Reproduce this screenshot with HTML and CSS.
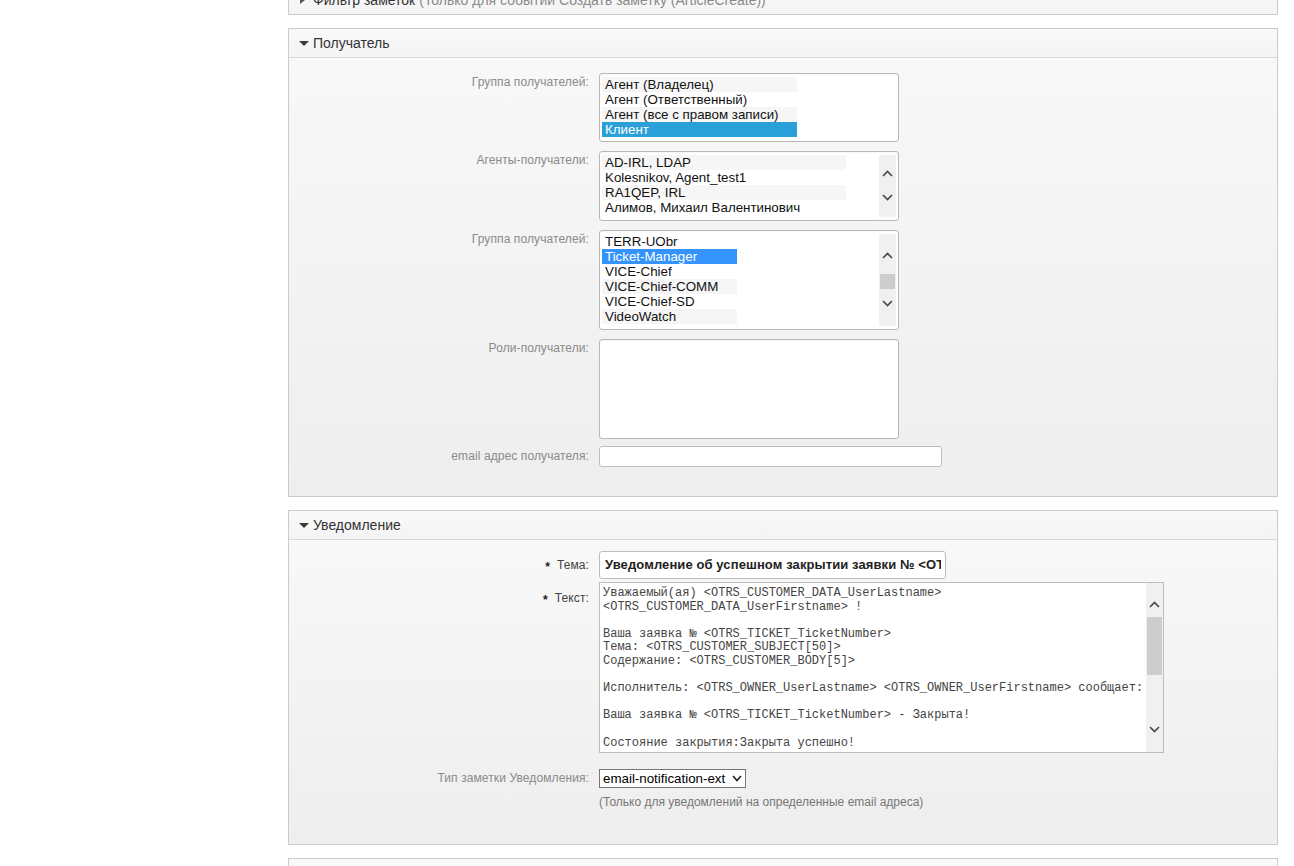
FILE: index.html
```html
<!DOCTYPE html>
<html lang="ru">
<head>
<meta charset="utf-8">
<title>Уведомление</title>
<link rel="stylesheet" href="styles.css">
</head>
<body>
<div class="page">
  <aside class="sidebar"></aside>
  <main class="main">
    <section class="widget collapsed">
      <div class="widget-header">
        <span class="tri tri-right"></span>
        <span class="title">Фильтр заметок</span>
        <span class="subtitle">(Только для событий Создать заметку (ArticleCreate))</span>
      </div>
    </section>

    <section class="widget open">
      <div class="widget-header">
        <span class="tri tri-down"></span>
        <span class="title">Получатель</span>
      </div>
      <div class="widget-content recipients">
        <div class="field-row">
          <label class="field-label">Группа получателей:</label>
          <div class="listbox lb1">
            <div class="options opts-w1">
              <div class="opt stripe">Агент (Владелец)</div>
              <div class="opt">Агент (Ответственный)</div>
              <div class="opt stripe">Агент (все с правом записи)</div>
              <div class="opt sel-a">Клиент</div>
            </div>
          </div>
        </div>
        <div class="field-row">
          <label class="field-label">Агенты-получатели:</label>
          <div class="listbox lb2">
            <div class="options opts-w2">
              <div class="opt stripe">AD-IRL, LDAP</div>
              <div class="opt">Kolesnikov, Agent_test1</div>
              <div class="opt stripe">RA1QEP, IRL</div>
              <div class="opt">Алимов, Михаил Валентинович</div>
            </div>
            <div class="scrollbar sb-lb2">
              <svg class="chev up" width="11" height="7" viewBox="0 0 11 7"><polyline points="1,6 5.5,1.5 10,6"/></svg>
              <svg class="chev down" width="11" height="7" viewBox="0 0 11 7"><polyline points="1,1 5.5,5.5 10,1"/></svg>
            </div>
          </div>
        </div>
        <div class="field-row">
          <label class="field-label">Группа получателей:</label>
          <div class="listbox lb3">
            <div class="options opts-w3">
              <div class="opt">TERR-UObr</div>
              <div class="opt sel-b">Ticket-Manager</div>
              <div class="opt">VICE-Chief</div>
              <div class="opt stripe">VICE-Chief-COMM</div>
              <div class="opt">VICE-Chief-SD</div>
              <div class="opt stripe">VideoWatch</div>
            </div>
            <div class="scrollbar sb-lb3">
              <svg class="chev up" width="11" height="7" viewBox="0 0 11 7"><polyline points="1,6 5.5,1.5 10,6"/></svg>
              <div class="thumb"></div>
              <svg class="chev down" width="11" height="7" viewBox="0 0 11 7"><polyline points="1,1 5.5,5.5 10,1"/></svg>
            </div>
          </div>
        </div>
        <div class="field-row">
          <label class="field-label">Роли-получатели:</label>
          <div class="listbox lb4"></div>
        </div>
        <div class="field-row center">
          <label class="field-label">email адрес получателя:</label>
          <div class="textinput email"></div>
        </div>
      </div>
    </section>

    <section class="widget open">
      <div class="widget-header">
        <span class="tri tri-down"></span>
        <span class="title">Уведомление</span>
      </div>
      <div class="widget-content notification">
        <div class="field-row center">
          <label class="field-label mandatory"><span class="star">*</span>Тема:</label>
          <div class="textinput subject"><span class="subject-text">Уведомление об успешном закрытии заявки № &lt;OTRS_CUSTOMER_SUBJECT&gt;</span></div>
        </div>
        <div class="field-row">
          <label class="field-label mandatory text-label"><span class="star">*</span>Текст:</label>
          <div class="textarea">
            <div class="textarea-text">Уважаемый(ая) &lt;OTRS_CUSTOMER_DATA_UserLastname&gt;
&lt;OTRS_CUSTOMER_DATA_UserFirstname&gt; !

Ваша заявка № &lt;OTRS_TICKET_TicketNumber&gt;
Тема: &lt;OTRS_CUSTOMER_SUBJECT[50]&gt;
Содержание: &lt;OTRS_CUSTOMER_BODY[5]&gt;

Исполнитель: &lt;OTRS_OWNER_UserLastname&gt; &lt;OTRS_OWNER_UserFirstname&gt; сообщает:

Ваша заявка № &lt;OTRS_TICKET_TicketNumber&gt; - Закрыта!

Состояние закрытия:Закрыта успешно!</div>
            <div class="scrollbar sb-ta">
              <svg class="chev up" width="11" height="7" viewBox="0 0 11 7"><polyline points="1,6 5.5,1.5 10,6"/></svg>
              <div class="thumb"></div>
              <svg class="chev down" width="11" height="7" viewBox="0 0 11 7"><polyline points="1,1 5.5,5.5 10,1"/></svg>
            </div>
          </div>
        </div>
        <div class="field-row center type-row">
          <label class="field-label">Тип заметки Уведомления:</label>
          <div class="dropdown">
            <span>email-notification-ext</span>
            <svg class="dd-chev" width="10" height="7" viewBox="0 0 10 7"><polyline points="1,1 5,5.5 9,1"/></svg>
          </div>
        </div>
        <div class="hint">(Только для уведомлений на определенные email адреса)</div>
      </div>
    </section>

    <section class="widget open last">
      <div class="widget-header"></div>
    </section>
  </main>
</div>
</body>
</html>
```

FILE: styles.css
```css
* { box-sizing: border-box; }

html, body {
  margin: 0;
  padding: 0;
  background: #ffffff;
}

body {
  font-family: "Liberation Sans", Arial, sans-serif;
  font-size: 12px;
  color: #333;
  overflow: hidden;
}

.page {
  display: flex;
  height: 866px;
}

.sidebar {
  width: 288px;
  flex: none;
}

.main {
  width: 990px;
  flex: none;
  margin-top: -15px;
  display: flex;
  flex-direction: column;
  gap: 13px;
}

.widget {
  border: 1px solid #cbcbcb;
  background: #f2f2f2;
}

.widget-header {
  height: 28px;
  display: flex;
  align-items: center;
  padding-left: 10px;
  background: linear-gradient(#f9f9f9, #f4f4f4);
  font-size: 14px;
  color: #333;
  white-space: nowrap;
}

.widget.open .widget-header {
  height: 29px;
  border-bottom: 1px solid #d9d9d9;
}

.widget.last .widget-header {
  height: 40px;
}

.tri {
  width: 0;
  height: 0;
  margin-right: 4px;
}

.tri-down {
  border-left: 5px solid transparent;
  border-right: 5px solid transparent;
  border-top: 5px solid #3a3a3a;
  margin-top: 1px;
}

.tri-right {
  border-top: 4px solid transparent;
  border-bottom: 4px solid transparent;
  border-left: 5px solid #555;
  margin-left: 1px;
  margin-right: 8px;
}

.subtitle {
  color: #8a8a8a;
  margin-left: 4px;
}

.widget-content {
  background: linear-gradient(#f8f8f8, #eeeeee);
}

.recipients {
  padding: 15px 0 29px;
  display: flex;
  flex-direction: column;
  gap: 9px;
}

.recipients .field-row:last-child {
  margin-top: -2px;
}

.notification {
  padding: 11px 0 34px;
}

.field-row {
  display: flex;
  align-items: flex-start;
}

.field-row.center {
  align-items: center;
}

.field-label {
  width: 300px;
  flex: none;
  text-align: right;
  color: #8a8a8a;
  font-size: 12px;
  line-height: 15px;
  padding-top: 2px;
  margin-right: 10px;
  letter-spacing: 0.1px;
}

.field-row.center .field-label {
  padding-top: 0;
}

.field-label.mandatory {
  color: #444;
}

.star {
  font-weight: bold;
  font-size: 12px;
  color: #222;
  position: relative;
  top: 2px;
  margin-right: 7px;
}

.text-label {
  padding-top: 12px;
}

/* list boxes */
.listbox {
  width: 300px;
  background: #fff;
  border: 1px solid #b8b8b8;
  border-radius: 3px;
  padding: 3px 2px;
  display: flex;
  justify-content: space-between;
  box-shadow: inset 0 1px 2px rgba(0,0,0,0.04);
}

.lb1 { height: 69px; }
.lb2 { height: 70px; }
.lb3 { height: 100px; }
.lb4 { height: 100px; }

.options {
  font-size: 13.33px;
  line-height: 15px;
  color: #111;
}

.opts-w1 { width: 195px; }
.opts-w2 { width: 244px; }
.opts-w3 { width: 135px; }

.opt {
  height: 15px;
  padding-left: 3px;
  white-space: nowrap;
}

.opt.stripe { background: #f6f6f6; }

.opt.sel-a {
  background: #2a9fd8;
  color: #fff;
}

.opt.sel-b {
  background: #3494fb;
  color: #fff;
}

/* scrollbars */
.scrollbar {
  width: 17px;
  flex: none;
  background: #f0f0f0;
  display: flex;
  flex-direction: column;
  align-items: center;
}

.chev {
  display: block;
  flex: none;
}

.chev polyline {
  fill: none;
  stroke: #4a4a4a;
  stroke-width: 1.7;
}

.thumb {
  width: 15px;
  background: #cdcdcd;
  flex: none;
}

.sb-lb2 .up { margin-top: 15px; }
.sb-lb2 .down { margin-top: 17px; }

.sb-lb3 .up { margin-top: 18px; }
.sb-lb3 .thumb { margin-top: 15px; height: 15px; }
.sb-lb3 .down { margin-top: 11px; }

.sb-ta .up { margin-top: 18px; }
.sb-ta .thumb { margin-top: 9px; height: 58px; }
.sb-ta .down { margin-top: 51px; }

/* inputs */
.textinput {
  background: #fff;
  border: 1px solid #bdbdbd;
  border-radius: 3px;
}

.email {
  width: 343px;
  height: 21px;
}

.subject {
  width: 347px;
  height: 28px;
  padding-left: 5px;
  font-size: 13px;
  font-weight: bold;
  line-height: 26px;
  color: #222;
  white-space: nowrap;
}

.subject-text {
  display: block;
  width: 336px;
  overflow: hidden;
  letter-spacing: 0.1px;
}

.textarea {
  width: 565px;
  height: 171px;
  margin-top: 3px;
  background: #fff;
  border: 1px solid #bdbdbd;
  display: flex;
  justify-content: space-between;
}

.textarea-text {
  font-family: "Liberation Mono", "Courier New", monospace;
  font-size: 12px;
  line-height: 13.6px;
  color: #444;
  white-space: pre;
  overflow: hidden;
  padding: 4px 0 0 3px;
  flex: 1;
}

.type-row {
  margin-top: 16px;
}

.dropdown {
  width: 147px;
  height: 19px;
  background: #fff;
  border: 1px solid #767676;
  display: flex;
  align-items: center;
  justify-content: space-between;
  padding: 0 3px 0 3px;
  font-size: 13.33px;
  color: #000;
  white-space: nowrap;
}

.dd-chev polyline {
  fill: none;
  stroke: #222;
  stroke-width: 1.6;
}

.hint {
  margin-left: 310px;
  margin-top: 7px;
  font-size: 12px;
  line-height: 15px;
  color: #777;
}
```
